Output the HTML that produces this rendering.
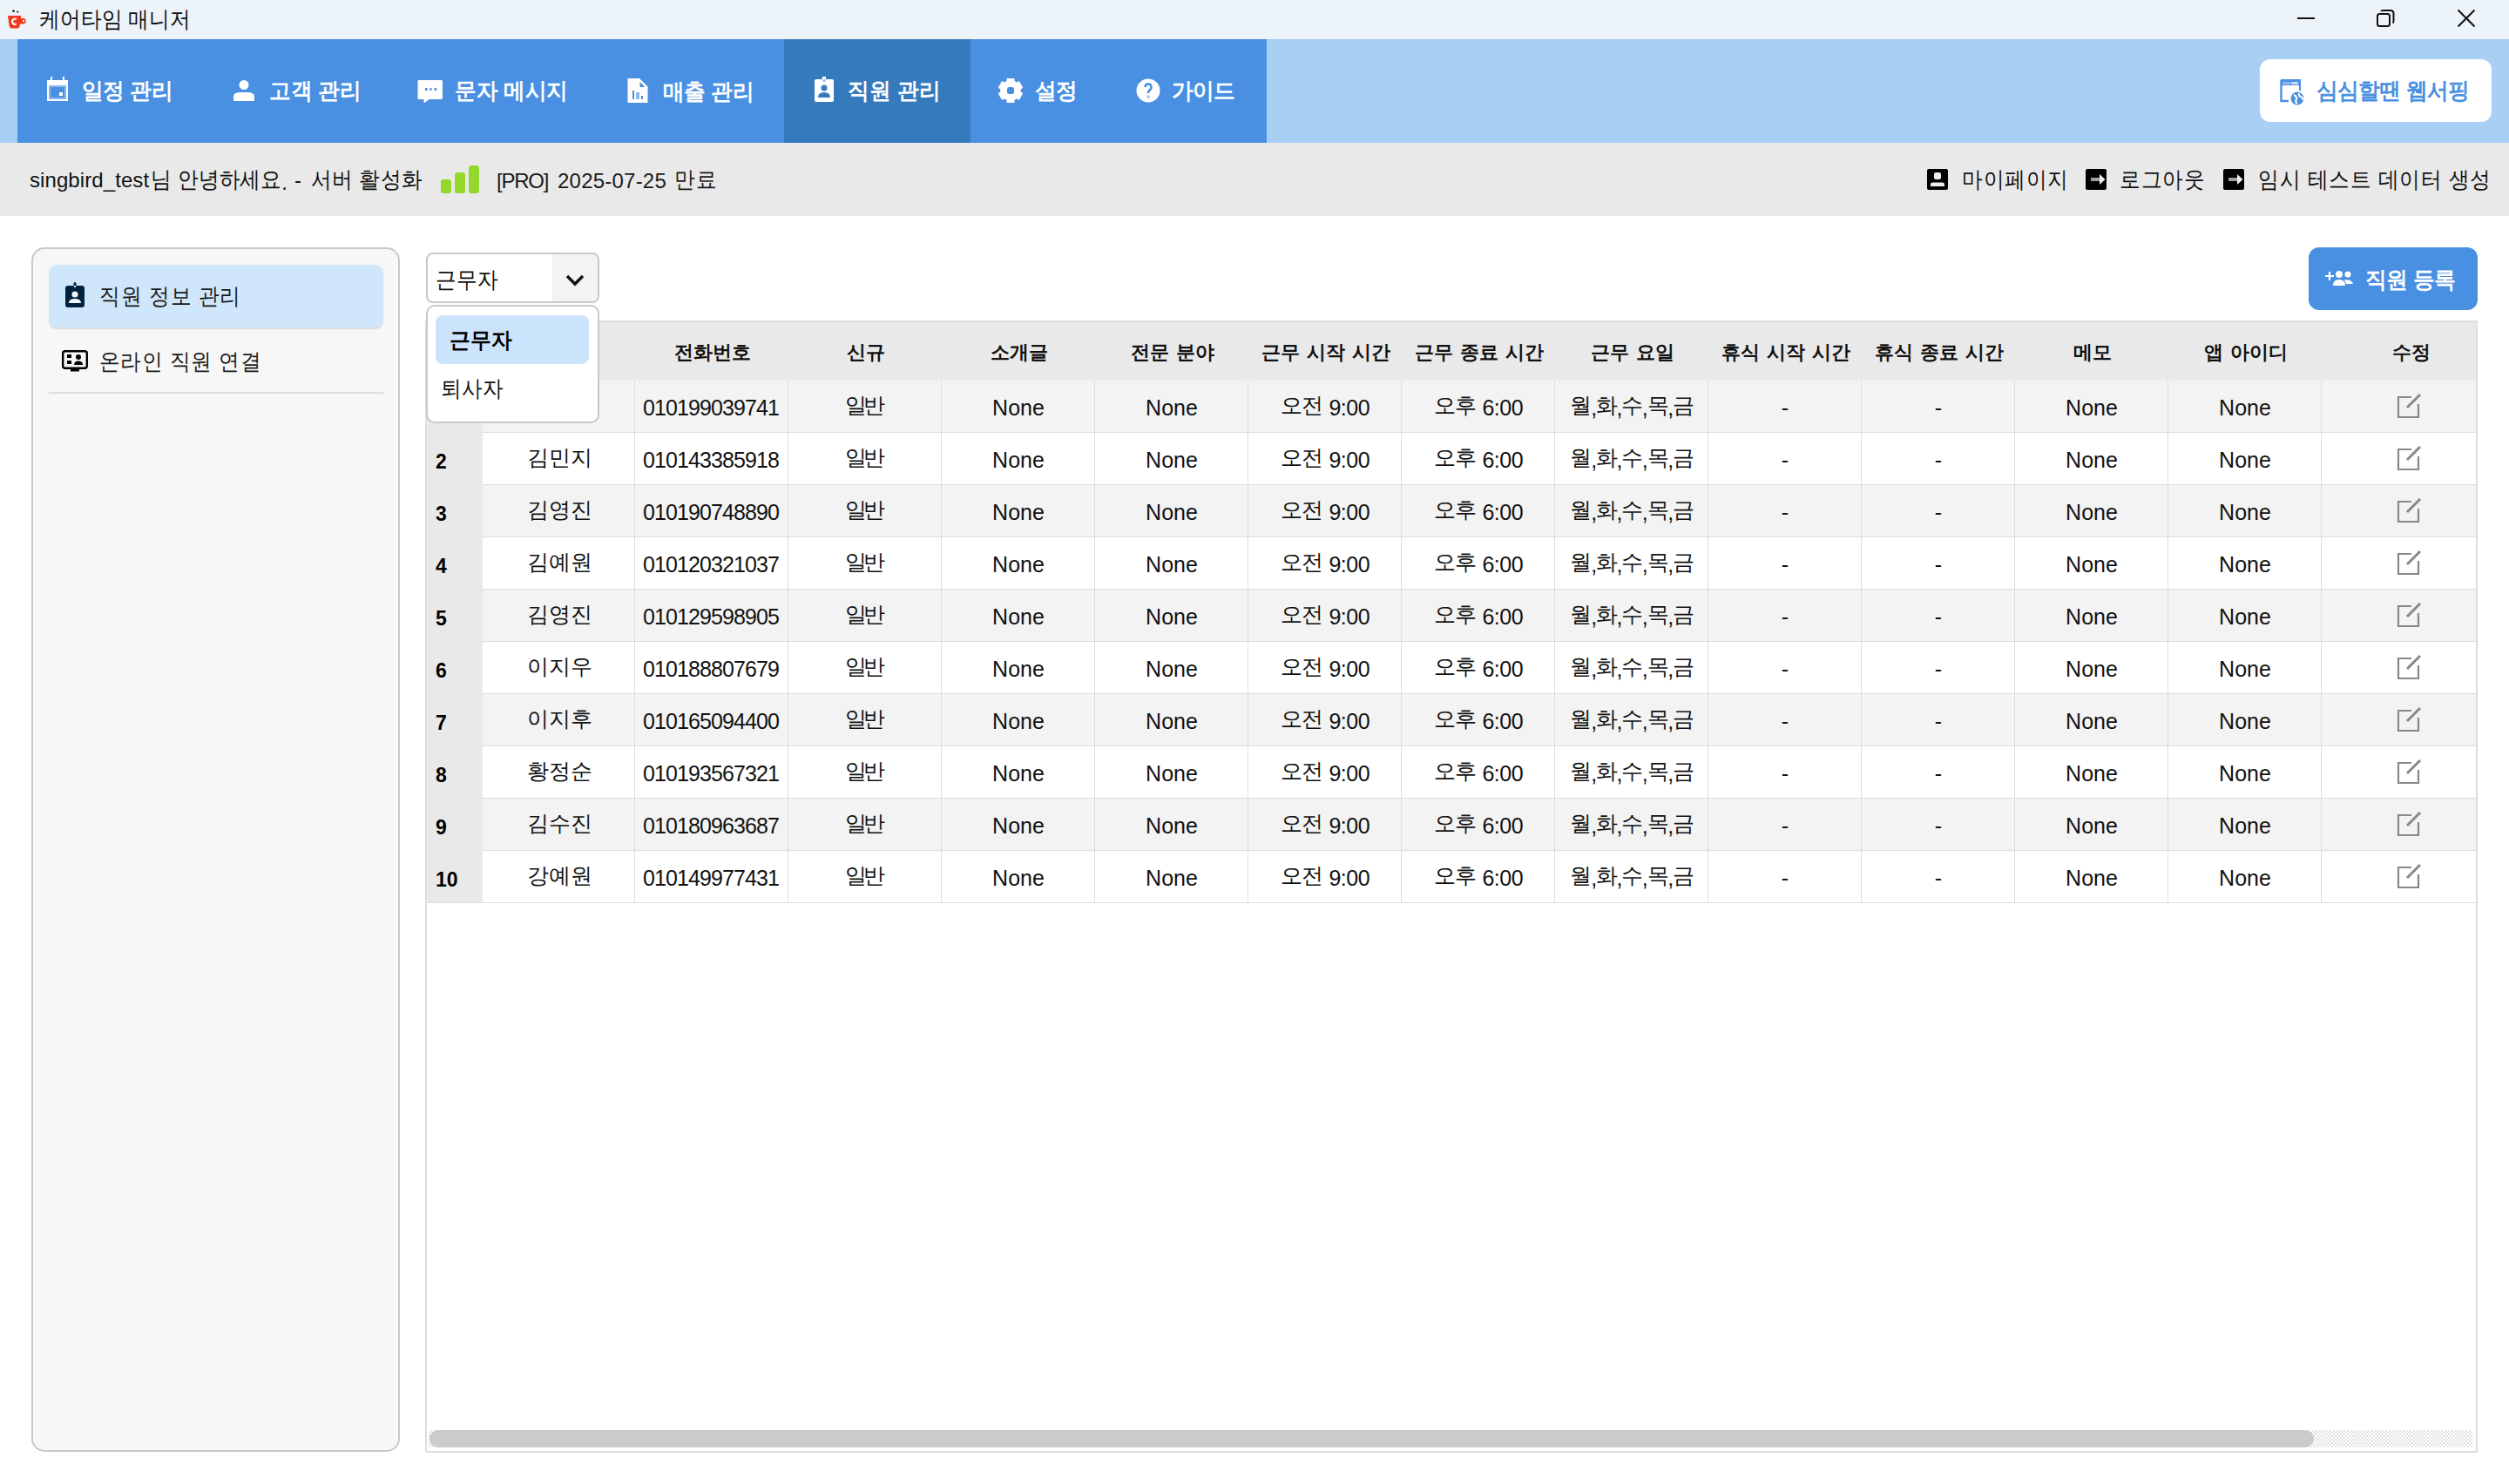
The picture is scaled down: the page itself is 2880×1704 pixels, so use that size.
<!DOCTYPE html>
<html><head><meta charset="utf-8"><title>케어타임 매니저</title>
<style>
*{box-sizing:border-box;margin:0;padding:0}
html,body{width:2880px;height:1704px;overflow:hidden;background:#fff;font-family:"Liberation Sans",sans-serif;color:#111}
.abs{position:absolute}
svg.abs{display:block}
.t{position:absolute;white-space:nowrap;line-height:1;word-spacing:0}
.k{position:relative;top:-0.13em}
.b{font-weight:bold}
.c{text-align:center}
.nw{word-spacing:0}
.hw{word-spacing:2px}
</style></head><body>

<div class="abs" style="left:0px;top:0px;width:2880px;height:45px;background:#ECF4FA"></div>
<svg class="abs" style="left:8px;top:10px" width="24" height="24" viewBox="0 0 24 24"><circle cx="7.5" cy="2.8" r="1.3" fill="#111"/><circle cx="12.3" cy="3.6" r="1.1" fill="#111"/><path d="M1 8 H16 V11 H18.5 A3 3 0 0 1 18.5 17.5 H15.2 Q14.6 22.5 12 22.5 H5.5 Q3 22.5 2.5 19 Z" fill="#F2391C"/><circle cx="19" cy="14" r="1.2" fill="#ECF4FA"/><path d="M10.8 12.3 A3 3 0 1 0 10.8 17.2" stroke="#fff" stroke-width="2" fill="none"/></svg>
<div class="t " style="left:45.00px;top:12.00px;font-size:26px;letter-spacing:0.236px;transform:scaleX(0.91);transform-origin:0 0;color:#111"><span class="k">케어타임 매니저</span></div>
<div class="abs" style="left:2637px;top:20px;width:20px;height:2px;background:#111"></div>
<svg class="abs" style="left:2726px;top:9px" width="26" height="26" viewBox="0 0 26 26"><rect x="3" y="7" width="14" height="14" rx="2.5" fill="none" stroke="#111" stroke-width="2"/><path d="M7 4 Q7.5 3 9.5 3 H18 Q21.5 3 21.5 6.5 V15 Q21.5 16.8 20.5 17.5" fill="none" stroke="#111" stroke-width="2"/></svg>
<svg class="abs" style="left:2819px;top:9px" width="24" height="24" viewBox="0 0 24 24"><path d="M2.5 2.5 L21.5 21.5 M21.5 2.5 L2.5 21.5" stroke="#111" stroke-width="2"/></svg>
<div class="abs" style="left:0px;top:45px;width:2880px;height:119px;background:#AACFF4"></div>
<div class="abs" style="left:20px;top:45px;width:1434px;height:119px;background:#4A90E2"></div>
<div class="abs" style="left:900px;top:45px;width:214px;height:119px;background:#357ABD"></div>
<svg class="abs" style="left:54px;top:88px" width="24" height="29" viewBox="0 0 24 29"><rect x="0" y="4" width="24" height="24" fill="#fff"/><rect x="2" y="10" width="20" height="16" fill="#8AB8EE"/><rect x="4" y="12" width="16" height="12" fill="#4A90E2"/><rect x="4" y="0" width="2" height="5" fill="#fff"/><rect x="18" y="0" width="2" height="5" fill="#fff"/><rect x="14" y="18" width="4" height="4" fill="#fff"/></svg>
<svg class="abs" style="left:268px;top:92px" width="24" height="24" viewBox="0 0 24 24"><circle cx="12" cy="5.5" r="5.5" fill="#fff"/><path d="M0 24 V19 Q0 14 8 14 H16 Q24 14 24 19 V24 Z" fill="#fff"/></svg>
<svg class="abs" style="left:479px;top:91px" width="30" height="28" viewBox="0 0 30 28"><path d="M1.5 1 H27.5 Q29 1 29 2.5 V21.5 Q29 23 27.5 23 H13.5 L8.5 27 H7.5 V23 H1.5 Q0.5 23 0.5 21.5 V2.5 Q0.5 1 1.5 1 Z" fill="#fff"/><rect x="9" y="10" width="2.6" height="3" fill="#4A90E2"/><rect x="14" y="10" width="3" height="3" fill="#7FB0EA"/><rect x="19.5" y="10" width="2.6" height="3" fill="#4A90E2"/></svg>
<svg class="abs" style="left:720px;top:90px" width="24" height="28" viewBox="0 0 24 28"><path d="M0.5 0 H14 L23.5 9.5 V28 H0.5 Z" fill="#fff"/><path d="M14.5 4 V10 H20.5 Z" fill="#4A90E2"/><rect x="6" y="14" width="2" height="10" fill="#4A90E2"/><rect x="10" y="16" width="4" height="8" fill="#8AB8EE"/><rect x="16" y="20" width="2" height="4" fill="#4A90E2"/></svg>
<svg class="abs" style="left:934px;top:88px" width="24" height="30" viewBox="0 0 24 30"><rect x="1" y="3" width="22" height="26" rx="2" fill="#fff"/><rect x="10" y="0" width="4" height="6" fill="#fff"/><rect x="10.5" y="3" width="3" height="3" fill="#9CC0E6"/><circle cx="12" cy="13" r="3.5" fill="#357ABD"/><path d="M5 24 Q5 18 12 18 Q19 18 19 24 Z" fill="#357ABD"/></svg>
<svg class="abs" style="left:1146px;top:90px" width="28" height="28" viewBox="0 0 28 28"><g transform="translate(14 14)" fill="#fff"><rect x="-4.5" y="-14" width="9" height="6" transform="rotate(0)"/><rect x="-4.5" y="-14" width="9" height="6" transform="rotate(60)"/><rect x="-4.5" y="-14" width="9" height="6" transform="rotate(120)"/><rect x="-4.5" y="-14" width="9" height="6" transform="rotate(180)"/><rect x="-4.5" y="-14" width="9" height="6" transform="rotate(240)"/><rect x="-4.5" y="-14" width="9" height="6" transform="rotate(300)"/><circle r="11.8"/></g><rect x="10" y="10" width="8" height="8" rx="2.5" fill="#4A90E2"/></svg>
<svg class="abs" style="left:1304px;top:90px" width="28" height="28" viewBox="0 0 28 28"><circle cx="14" cy="14" r="13.5" fill="#fff"/><path d="M10.5 10 Q10.5 6.5 14 6.5 Q17.5 6.5 17.5 10 Q17.5 12.5 15.5 13.5 Q14 14.5 14 17" fill="none" stroke="#4A90E2" stroke-width="2.6"/><rect x="12.4" y="19.5" width="3.2" height="3.2" fill="#9EC4F0"/></svg>
<div class="t b" style="left:94.00px;top:94.00px;font-size:26px;letter-spacing:-0.312px;transform:scaleX(0.95);transform-origin:0 0;color:#fff"><span class="k">일정 관리</span></div>
<div class="t b" style="left:309.00px;top:94.00px;font-size:26px;letter-spacing:-0.024px;transform:scaleX(0.95);transform-origin:0 0;color:#fff"><span class="k">고객 관리</span></div>
<div class="t b" style="left:522.00px;top:94.00px;font-size:26px;letter-spacing:-0.087px;transform:scaleX(0.95);transform-origin:0 0;color:#fff"><span class="k">문자 메시지</span></div>
<div class="t b" style="left:761.00px;top:95.00px;font-size:26px;letter-spacing:-0.274px;transform:scaleX(0.95);transform-origin:0 0;color:#fff"><span class="k">매출 관리</span></div>
<div class="t b" style="left:973.00px;top:94.00px;font-size:26px;letter-spacing:0.264px;transform:scaleX(0.95);transform-origin:0 0;color:#fff"><span class="k">직원 관리</span></div>
<div class="t b" style="left:1188.00px;top:94.00px;font-size:26px;letter-spacing:-0.730px;transform:scaleX(0.95);transform-origin:0 0;color:#fff"><span class="k">설정</span></div>
<div class="t b" style="left:1345.00px;top:94.00px;font-size:26px;letter-spacing:-0.534px;transform:scaleX(0.95);transform-origin:0 0;color:#fff"><span class="k">가이드</span></div>
<div class="abs" style="left:2594px;top:68px;width:266px;height:72px;background:#fff;border-radius:12px"></div>
<svg class="abs" style="left:2617px;top:91px" width="30" height="30" viewBox="0 0 30 30"><path d="M1 1 H23 V13" fill="none" stroke="#4A90E2" stroke-width="2"/><rect x="1" y="1" width="22" height="6" fill="#4A90E2"/><rect x="3" y="3" width="9" height="3" fill="#8DB8EE"/><rect x="13" y="3" width="8" height="3" fill="#C6DCF6"/><path d="M1.5 1 V25 H10" fill="none" stroke="#4A90E2" stroke-width="2.4"/><circle cx="20" cy="22" r="7.5" fill="#4A90E2"/><path d="M16 18 Q20 20 19 23 Q17 26 20 28 M22 16 Q21 19 24 20 Q26 21 27 24" stroke="#fff" stroke-width="2" fill="none"/></svg>
<div class="t b" style="left:2659.00px;top:94.00px;font-size:26px;letter-spacing:-0.595px;transform:scaleX(0.95);transform-origin:0 0;color:#4A90E2"><span class="k">심심할땐 웹서핑</span></div>
<div class="abs" style="left:0px;top:164px;width:2880px;height:84px;background:#E9E9E9"></div>
<div class="t " style="left:34.00px;top:195.00px;font-size:24px;letter-spacing:0.083px;color:#111">singbird_test</div>
<div class="t " style="left:173.00px;top:196.00px;font-size:26px;letter-spacing:-21.297px;transform:scaleX(0.91);transform-origin:0 0;color:#111"><span class="k">님</span></div>
<div class="t " style="left:204.00px;top:196.00px;font-size:26px;letter-spacing:0.182px;transform:scaleX(0.91);transform-origin:0 0;color:#111"><span class="k">안녕하세요</span>.</div>
<div class="t " style="left:338.00px;top:195.00px;font-size:24px;letter-spacing:24.000px;color:#111">-</div>
<div class="t " style="left:357.00px;top:196.00px;font-size:26px;letter-spacing:0.144px;transform:scaleX(0.91);transform-origin:0 0;color:#111"><span class="k">서버</span></div>
<div class="t " style="left:412.00px;top:196.00px;font-size:26px;letter-spacing:0.932px;transform:scaleX(0.91);transform-origin:0 0;color:#111"><span class="k">활성화</span></div>
<div class="abs" style="left:506px;top:206px;width:12px;height:16px;background:#94D82D;border-radius:3px"></div>
<div class="abs" style="left:522px;top:198px;width:12px;height:24px;background:#94D82D;border-radius:3px"></div>
<div class="abs" style="left:538px;top:190px;width:12px;height:32px;background:#94D82D;border-radius:3px"></div>
<div class="t " style="left:570.00px;top:196.00px;font-size:24px;letter-spacing:-1.250px;color:#1a1a1a">[PRO]</div>
<div class="t " style="left:640.00px;top:196.00px;font-size:24px;letter-spacing:0.222px;color:#1a1a1a">2025-07-25</div>
<div class="t " style="left:774.00px;top:196.00px;font-size:26px;letter-spacing:0.939px;transform:scaleX(0.91);transform-origin:0 0;color:#1a1a1a"><span class="k">만료</span></div>
<svg class="abs" style="left:2212px;top:194px" width="24" height="24" viewBox="0 0 24 24"><rect x="0" y="0" width="24" height="24" rx="2" fill="#000"/><rect x="8" y="4" width="8" height="8" rx="2" fill="#eee"/><path d="M4 20 V17.5 Q4 15.5 7 15.5 H17 Q20 15.5 20 17.5 V20 Z" fill="#eee"/></svg>
<div class="t " style="left:2252.00px;top:196.00px;font-size:26px;letter-spacing:1.002px;transform:scaleX(0.91);transform-origin:0 0;color:#111"><span class="k">마이페이지</span></div>
<svg class="abs" style="left:2394px;top:194px" width="24" height="24" viewBox="0 0 24 24"><rect x="0" y="0" width="24" height="24" rx="2" fill="#000"/><rect x="6" y="10" width="11" height="4" fill="#A0A0A0"/><path d="M16 6 L22.5 12 L16 18 Z" fill="#EEE"/></svg>
<div class="t " style="left:2433.00px;top:196.00px;font-size:26px;letter-spacing:1.129px;transform:scaleX(0.91);transform-origin:0 0;color:#111"><span class="k">로그아웃</span></div>
<svg class="abs" style="left:2552px;top:194px" width="24" height="24" viewBox="0 0 24 24"><rect x="0" y="0" width="24" height="24" rx="2" fill="#000"/><rect x="6" y="10" width="11" height="4" fill="#A0A0A0"/><path d="M16 6 L22.5 12 L16 18 Z" fill="#EEE"/></svg>
<div class="t " style="left:2592.00px;top:196.00px;font-size:26px;letter-spacing:0.977px;transform:scaleX(0.91);transform-origin:0 0;color:#111"><span class="k">임시 테스트 데이터 생성</span></div>
<div class="abs" style="left:36px;top:284px;width:423px;height:1383px;background:#F7F7F7;border:2px solid #C8C8C8;border-radius:15px"></div>
<div class="abs" style="left:56px;top:304px;width:384px;height:72px;background:#D0E6FB;border-radius:9px;box-shadow:0 2px 1px #D8DCE0"></div>
<svg class="abs" style="left:75px;top:324px" width="22" height="30" viewBox="0 0 22 30"><rect x="0" y="4" width="22" height="25" rx="3" fill="#00223F"/><rect x="9.5" y="0" width="3" height="6" rx="1.5" fill="#00223F"/><circle cx="11" cy="5" r="1.2" fill="#D0E6FB"/><circle cx="11" cy="14" r="3.6" fill="#F0F4F8"/><path d="M4 24 Q4 19 11 19 Q18 19 18 24 Z" fill="#F0F4F8"/></svg>
<div class="t " style="left:114.00px;top:330.00px;font-size:26px;letter-spacing:1.106px;transform:scaleX(0.91);transform-origin:0 0;color:#1a1a1a"><span class="k">직원 정보 관리</span></div>
<svg class="abs" style="left:71px;top:402px" width="30" height="25" viewBox="0 0 30 25"><rect x="1.2" y="1.2" width="27.6" height="19.6" rx="2.5" fill="none" stroke="#000" stroke-width="2.4"/><rect x="10" y="21" width="10" height="3.5" fill="#000"/><rect x="6" y="5" width="5" height="4" fill="#000"/><rect x="6" y="12" width="5" height="4" fill="#000"/><circle cx="19" cy="8" r="3" fill="#000"/><path d="M14 17 Q14 12.5 19 12.5 Q24 12.5 24 17 Z" fill="#000"/></svg>
<div class="t " style="left:114.00px;top:405.00px;font-size:26px;letter-spacing:0.908px;transform:scaleX(0.91);transform-origin:0 0;color:#1a1a1a"><span class="k">온라인 직원 연결</span></div>
<div class="abs" style="left:56px;top:450px;width:384px;height:2px;background:#DDDDDD"></div>
<div class="abs" style="left:488px;top:368px;width:2356px;height:1300px;background:#fff;border:2px solid #DDDDDD"></div>
<div class="abs" style="left:490px;top:370px;width:2352px;height:67px;background:#E9E9E9"></div>
<div class="abs" style="left:554px;top:437px;width:2288px;height:59px;background:#F3F3F3"></div>
<div class="abs" style="left:554px;top:496px;width:2288px;height:1px;background:#DDDDDD"></div>
<div class="abs" style="left:554px;top:497px;width:2288px;height:59px;background:#FFFFFF"></div>
<div class="abs" style="left:554px;top:556px;width:2288px;height:1px;background:#DDDDDD"></div>
<div class="abs" style="left:554px;top:557px;width:2288px;height:59px;background:#F3F3F3"></div>
<div class="abs" style="left:554px;top:616px;width:2288px;height:1px;background:#DDDDDD"></div>
<div class="abs" style="left:554px;top:617px;width:2288px;height:59px;background:#FFFFFF"></div>
<div class="abs" style="left:554px;top:676px;width:2288px;height:1px;background:#DDDDDD"></div>
<div class="abs" style="left:554px;top:677px;width:2288px;height:59px;background:#F3F3F3"></div>
<div class="abs" style="left:554px;top:736px;width:2288px;height:1px;background:#DDDDDD"></div>
<div class="abs" style="left:554px;top:737px;width:2288px;height:59px;background:#FFFFFF"></div>
<div class="abs" style="left:554px;top:796px;width:2288px;height:1px;background:#DDDDDD"></div>
<div class="abs" style="left:554px;top:797px;width:2288px;height:59px;background:#F3F3F3"></div>
<div class="abs" style="left:554px;top:856px;width:2288px;height:1px;background:#DDDDDD"></div>
<div class="abs" style="left:554px;top:857px;width:2288px;height:59px;background:#FFFFFF"></div>
<div class="abs" style="left:554px;top:916px;width:2288px;height:1px;background:#DDDDDD"></div>
<div class="abs" style="left:554px;top:917px;width:2288px;height:59px;background:#F3F3F3"></div>
<div class="abs" style="left:554px;top:976px;width:2288px;height:1px;background:#DDDDDD"></div>
<div class="abs" style="left:554px;top:977px;width:2288px;height:59px;background:#FFFFFF"></div>
<div class="abs" style="left:554px;top:1036px;width:2288px;height:1px;background:#DDDDDD"></div>
<div class="abs" style="left:490px;top:437px;width:64px;height:599px;background:#E9E9E9"></div>
<div class="abs" style="left:490px;top:1036px;width:64px;height:1px;background:#DDDDDD"></div>
<div class="abs" style="left:728px;top:437px;width:1px;height:599px;background:#DDDDDD"></div>
<div class="abs" style="left:904px;top:437px;width:1px;height:599px;background:#DDDDDD"></div>
<div class="abs" style="left:1080px;top:437px;width:1px;height:599px;background:#DDDDDD"></div>
<div class="abs" style="left:1256px;top:437px;width:1px;height:599px;background:#DDDDDD"></div>
<div class="abs" style="left:1432px;top:437px;width:1px;height:599px;background:#DDDDDD"></div>
<div class="abs" style="left:1608px;top:437px;width:1px;height:599px;background:#DDDDDD"></div>
<div class="abs" style="left:1784px;top:437px;width:1px;height:599px;background:#DDDDDD"></div>
<div class="abs" style="left:1960px;top:437px;width:1px;height:599px;background:#DDDDDD"></div>
<div class="abs" style="left:2136px;top:437px;width:1px;height:599px;background:#DDDDDD"></div>
<div class="abs" style="left:2312px;top:437px;width:1px;height:599px;background:#DDDDDD"></div>
<div class="abs" style="left:2488px;top:437px;width:1px;height:599px;background:#DDDDDD"></div>
<div class="abs" style="left:2664px;top:437px;width:1px;height:599px;background:#DDDDDD"></div>
<div class="t c b hw" style="left:556px;top:397px;width:174px;font-size:22px;letter-spacing:0px;color:#111"><span class="k">이름</span></div>
<div class="t c b hw" style="left:730px;top:397px;width:176px;font-size:22px;letter-spacing:0px;color:#111"><span class="k">전화번호</span></div>
<div class="t c b hw" style="left:906px;top:397px;width:176px;font-size:22px;letter-spacing:0px;color:#111"><span class="k">신규</span></div>
<div class="t c b hw" style="left:1082px;top:397px;width:176px;font-size:22px;letter-spacing:0px;color:#111"><span class="k">소개글</span></div>
<div class="t c b hw" style="left:1258px;top:397px;width:176px;font-size:22px;letter-spacing:0px;color:#111"><span class="k">전문 분야</span></div>
<div class="t c b hw" style="left:1434px;top:397px;width:176px;font-size:22px;letter-spacing:0px;color:#111"><span class="k">근무 시작 시간</span></div>
<div class="t c b hw" style="left:1610px;top:397px;width:176px;font-size:22px;letter-spacing:0px;color:#111"><span class="k">근무 종료 시간</span></div>
<div class="t c b hw" style="left:1786px;top:397px;width:176px;font-size:22px;letter-spacing:0px;color:#111"><span class="k">근무 요일</span></div>
<div class="t c b hw" style="left:1962px;top:397px;width:176px;font-size:22px;letter-spacing:0px;color:#111"><span class="k">휴식 시작 시간</span></div>
<div class="t c b hw" style="left:2138px;top:397px;width:176px;font-size:22px;letter-spacing:0px;color:#111"><span class="k">휴식 종료 시간</span></div>
<div class="t c b hw" style="left:2314px;top:397px;width:176px;font-size:22px;letter-spacing:0px;color:#111"><span class="k">메모</span></div>
<div class="t c b hw" style="left:2490px;top:397px;width:176px;font-size:22px;letter-spacing:0px;color:#111"><span class="k">앱 아이디</span></div>
<div class="t c b hw" style="left:2666px;top:397px;width:204px;font-size:22px;letter-spacing:0px;color:#111"><span class="k">수정</span></div>
<div class="t b" style="left:500px;top:459px;font-size:23px;color:#000">1</div>
<div class="t c nw" style="left:555px;top:456px;width:174px;font-size:25px;letter-spacing:0px;color:#111"><span class="k">김지우</span></div>
<div class="t c nw" style="left:728px;top:456px;width:176px;font-size:25px;letter-spacing:-0.9px;color:#111">010199039741</div>
<div class="t c nw" style="left:903px;top:456px;width:176px;font-size:25px;letter-spacing:-4px;color:#111"><span class="k">일반</span></div>
<div class="t c nw" style="left:1081px;top:456px;width:176px;font-size:25px;letter-spacing:0px;color:#111">None</div>
<div class="t c nw" style="left:1257px;top:456px;width:176px;font-size:25px;letter-spacing:0px;color:#111">None</div>
<div class="t c nw" style="left:1433px;top:456px;width:176px;font-size:25px;letter-spacing:-0.5px;color:#111"><span class="k">오전</span> 9:00</div>
<div class="t c nw" style="left:1609px;top:456px;width:176px;font-size:25px;letter-spacing:-0.5px;color:#111"><span class="k">오후</span> 6:00</div>
<div class="t c nw" style="left:1785px;top:456px;width:176px;font-size:25px;letter-spacing:-1.3px;color:#111"><span class="k">월</span>,<span class="k">화</span>,<span class="k">수</span>,<span class="k">목</span>,<span class="k">금</span></div>
<div class="t c nw" style="left:1961px;top:456px;width:176px;font-size:25px;letter-spacing:0px;color:#111">-</div>
<div class="t c nw" style="left:2137px;top:456px;width:176px;font-size:25px;letter-spacing:0px;color:#111">-</div>
<div class="t c nw" style="left:2313px;top:456px;width:176px;font-size:25px;letter-spacing:0px;color:#111">None</div>
<div class="t c nw" style="left:2489px;top:456px;width:176px;font-size:25px;letter-spacing:0px;color:#111">None</div>
<svg class="abs" style="left:2751px;top:451px" width="30" height="30" viewBox="0 0 30 30"><path d="M17 5 H2 V28 H25 V13" fill="none" stroke="#888" stroke-width="2.2"/><path d="M12 17 L27 2" stroke="#888" stroke-width="3"/></svg>
<div class="t b" style="left:500px;top:519px;font-size:23px;color:#000">2</div>
<div class="t c nw" style="left:555px;top:516px;width:174px;font-size:25px;letter-spacing:0px;color:#111"><span class="k">김민지</span></div>
<div class="t c nw" style="left:728px;top:516px;width:176px;font-size:25px;letter-spacing:-0.9px;color:#111">010143385918</div>
<div class="t c nw" style="left:903px;top:516px;width:176px;font-size:25px;letter-spacing:-4px;color:#111"><span class="k">일반</span></div>
<div class="t c nw" style="left:1081px;top:516px;width:176px;font-size:25px;letter-spacing:0px;color:#111">None</div>
<div class="t c nw" style="left:1257px;top:516px;width:176px;font-size:25px;letter-spacing:0px;color:#111">None</div>
<div class="t c nw" style="left:1433px;top:516px;width:176px;font-size:25px;letter-spacing:-0.5px;color:#111"><span class="k">오전</span> 9:00</div>
<div class="t c nw" style="left:1609px;top:516px;width:176px;font-size:25px;letter-spacing:-0.5px;color:#111"><span class="k">오후</span> 6:00</div>
<div class="t c nw" style="left:1785px;top:516px;width:176px;font-size:25px;letter-spacing:-1.3px;color:#111"><span class="k">월</span>,<span class="k">화</span>,<span class="k">수</span>,<span class="k">목</span>,<span class="k">금</span></div>
<div class="t c nw" style="left:1961px;top:516px;width:176px;font-size:25px;letter-spacing:0px;color:#111">-</div>
<div class="t c nw" style="left:2137px;top:516px;width:176px;font-size:25px;letter-spacing:0px;color:#111">-</div>
<div class="t c nw" style="left:2313px;top:516px;width:176px;font-size:25px;letter-spacing:0px;color:#111">None</div>
<div class="t c nw" style="left:2489px;top:516px;width:176px;font-size:25px;letter-spacing:0px;color:#111">None</div>
<svg class="abs" style="left:2751px;top:511px" width="30" height="30" viewBox="0 0 30 30"><path d="M17 5 H2 V28 H25 V13" fill="none" stroke="#888" stroke-width="2.2"/><path d="M12 17 L27 2" stroke="#888" stroke-width="3"/></svg>
<div class="t b" style="left:500px;top:579px;font-size:23px;color:#000">3</div>
<div class="t c nw" style="left:555px;top:576px;width:174px;font-size:25px;letter-spacing:0px;color:#111"><span class="k">김영진</span></div>
<div class="t c nw" style="left:728px;top:576px;width:176px;font-size:25px;letter-spacing:-0.9px;color:#111">010190748890</div>
<div class="t c nw" style="left:903px;top:576px;width:176px;font-size:25px;letter-spacing:-4px;color:#111"><span class="k">일반</span></div>
<div class="t c nw" style="left:1081px;top:576px;width:176px;font-size:25px;letter-spacing:0px;color:#111">None</div>
<div class="t c nw" style="left:1257px;top:576px;width:176px;font-size:25px;letter-spacing:0px;color:#111">None</div>
<div class="t c nw" style="left:1433px;top:576px;width:176px;font-size:25px;letter-spacing:-0.5px;color:#111"><span class="k">오전</span> 9:00</div>
<div class="t c nw" style="left:1609px;top:576px;width:176px;font-size:25px;letter-spacing:-0.5px;color:#111"><span class="k">오후</span> 6:00</div>
<div class="t c nw" style="left:1785px;top:576px;width:176px;font-size:25px;letter-spacing:-1.3px;color:#111"><span class="k">월</span>,<span class="k">화</span>,<span class="k">수</span>,<span class="k">목</span>,<span class="k">금</span></div>
<div class="t c nw" style="left:1961px;top:576px;width:176px;font-size:25px;letter-spacing:0px;color:#111">-</div>
<div class="t c nw" style="left:2137px;top:576px;width:176px;font-size:25px;letter-spacing:0px;color:#111">-</div>
<div class="t c nw" style="left:2313px;top:576px;width:176px;font-size:25px;letter-spacing:0px;color:#111">None</div>
<div class="t c nw" style="left:2489px;top:576px;width:176px;font-size:25px;letter-spacing:0px;color:#111">None</div>
<svg class="abs" style="left:2751px;top:571px" width="30" height="30" viewBox="0 0 30 30"><path d="M17 5 H2 V28 H25 V13" fill="none" stroke="#888" stroke-width="2.2"/><path d="M12 17 L27 2" stroke="#888" stroke-width="3"/></svg>
<div class="t b" style="left:500px;top:639px;font-size:23px;color:#000">4</div>
<div class="t c nw" style="left:555px;top:636px;width:174px;font-size:25px;letter-spacing:0px;color:#111"><span class="k">김예원</span></div>
<div class="t c nw" style="left:728px;top:636px;width:176px;font-size:25px;letter-spacing:-0.9px;color:#111">010120321037</div>
<div class="t c nw" style="left:903px;top:636px;width:176px;font-size:25px;letter-spacing:-4px;color:#111"><span class="k">일반</span></div>
<div class="t c nw" style="left:1081px;top:636px;width:176px;font-size:25px;letter-spacing:0px;color:#111">None</div>
<div class="t c nw" style="left:1257px;top:636px;width:176px;font-size:25px;letter-spacing:0px;color:#111">None</div>
<div class="t c nw" style="left:1433px;top:636px;width:176px;font-size:25px;letter-spacing:-0.5px;color:#111"><span class="k">오전</span> 9:00</div>
<div class="t c nw" style="left:1609px;top:636px;width:176px;font-size:25px;letter-spacing:-0.5px;color:#111"><span class="k">오후</span> 6:00</div>
<div class="t c nw" style="left:1785px;top:636px;width:176px;font-size:25px;letter-spacing:-1.3px;color:#111"><span class="k">월</span>,<span class="k">화</span>,<span class="k">수</span>,<span class="k">목</span>,<span class="k">금</span></div>
<div class="t c nw" style="left:1961px;top:636px;width:176px;font-size:25px;letter-spacing:0px;color:#111">-</div>
<div class="t c nw" style="left:2137px;top:636px;width:176px;font-size:25px;letter-spacing:0px;color:#111">-</div>
<div class="t c nw" style="left:2313px;top:636px;width:176px;font-size:25px;letter-spacing:0px;color:#111">None</div>
<div class="t c nw" style="left:2489px;top:636px;width:176px;font-size:25px;letter-spacing:0px;color:#111">None</div>
<svg class="abs" style="left:2751px;top:631px" width="30" height="30" viewBox="0 0 30 30"><path d="M17 5 H2 V28 H25 V13" fill="none" stroke="#888" stroke-width="2.2"/><path d="M12 17 L27 2" stroke="#888" stroke-width="3"/></svg>
<div class="t b" style="left:500px;top:699px;font-size:23px;color:#000">5</div>
<div class="t c nw" style="left:555px;top:696px;width:174px;font-size:25px;letter-spacing:0px;color:#111"><span class="k">김영진</span></div>
<div class="t c nw" style="left:728px;top:696px;width:176px;font-size:25px;letter-spacing:-0.9px;color:#111">010129598905</div>
<div class="t c nw" style="left:903px;top:696px;width:176px;font-size:25px;letter-spacing:-4px;color:#111"><span class="k">일반</span></div>
<div class="t c nw" style="left:1081px;top:696px;width:176px;font-size:25px;letter-spacing:0px;color:#111">None</div>
<div class="t c nw" style="left:1257px;top:696px;width:176px;font-size:25px;letter-spacing:0px;color:#111">None</div>
<div class="t c nw" style="left:1433px;top:696px;width:176px;font-size:25px;letter-spacing:-0.5px;color:#111"><span class="k">오전</span> 9:00</div>
<div class="t c nw" style="left:1609px;top:696px;width:176px;font-size:25px;letter-spacing:-0.5px;color:#111"><span class="k">오후</span> 6:00</div>
<div class="t c nw" style="left:1785px;top:696px;width:176px;font-size:25px;letter-spacing:-1.3px;color:#111"><span class="k">월</span>,<span class="k">화</span>,<span class="k">수</span>,<span class="k">목</span>,<span class="k">금</span></div>
<div class="t c nw" style="left:1961px;top:696px;width:176px;font-size:25px;letter-spacing:0px;color:#111">-</div>
<div class="t c nw" style="left:2137px;top:696px;width:176px;font-size:25px;letter-spacing:0px;color:#111">-</div>
<div class="t c nw" style="left:2313px;top:696px;width:176px;font-size:25px;letter-spacing:0px;color:#111">None</div>
<div class="t c nw" style="left:2489px;top:696px;width:176px;font-size:25px;letter-spacing:0px;color:#111">None</div>
<svg class="abs" style="left:2751px;top:691px" width="30" height="30" viewBox="0 0 30 30"><path d="M17 5 H2 V28 H25 V13" fill="none" stroke="#888" stroke-width="2.2"/><path d="M12 17 L27 2" stroke="#888" stroke-width="3"/></svg>
<div class="t b" style="left:500px;top:759px;font-size:23px;color:#000">6</div>
<div class="t c nw" style="left:555px;top:756px;width:174px;font-size:25px;letter-spacing:0px;color:#111"><span class="k">이지우</span></div>
<div class="t c nw" style="left:728px;top:756px;width:176px;font-size:25px;letter-spacing:-0.9px;color:#111">010188807679</div>
<div class="t c nw" style="left:903px;top:756px;width:176px;font-size:25px;letter-spacing:-4px;color:#111"><span class="k">일반</span></div>
<div class="t c nw" style="left:1081px;top:756px;width:176px;font-size:25px;letter-spacing:0px;color:#111">None</div>
<div class="t c nw" style="left:1257px;top:756px;width:176px;font-size:25px;letter-spacing:0px;color:#111">None</div>
<div class="t c nw" style="left:1433px;top:756px;width:176px;font-size:25px;letter-spacing:-0.5px;color:#111"><span class="k">오전</span> 9:00</div>
<div class="t c nw" style="left:1609px;top:756px;width:176px;font-size:25px;letter-spacing:-0.5px;color:#111"><span class="k">오후</span> 6:00</div>
<div class="t c nw" style="left:1785px;top:756px;width:176px;font-size:25px;letter-spacing:-1.3px;color:#111"><span class="k">월</span>,<span class="k">화</span>,<span class="k">수</span>,<span class="k">목</span>,<span class="k">금</span></div>
<div class="t c nw" style="left:1961px;top:756px;width:176px;font-size:25px;letter-spacing:0px;color:#111">-</div>
<div class="t c nw" style="left:2137px;top:756px;width:176px;font-size:25px;letter-spacing:0px;color:#111">-</div>
<div class="t c nw" style="left:2313px;top:756px;width:176px;font-size:25px;letter-spacing:0px;color:#111">None</div>
<div class="t c nw" style="left:2489px;top:756px;width:176px;font-size:25px;letter-spacing:0px;color:#111">None</div>
<svg class="abs" style="left:2751px;top:751px" width="30" height="30" viewBox="0 0 30 30"><path d="M17 5 H2 V28 H25 V13" fill="none" stroke="#888" stroke-width="2.2"/><path d="M12 17 L27 2" stroke="#888" stroke-width="3"/></svg>
<div class="t b" style="left:500px;top:819px;font-size:23px;color:#000">7</div>
<div class="t c nw" style="left:555px;top:816px;width:174px;font-size:25px;letter-spacing:0px;color:#111"><span class="k">이지후</span></div>
<div class="t c nw" style="left:728px;top:816px;width:176px;font-size:25px;letter-spacing:-0.9px;color:#111">010165094400</div>
<div class="t c nw" style="left:903px;top:816px;width:176px;font-size:25px;letter-spacing:-4px;color:#111"><span class="k">일반</span></div>
<div class="t c nw" style="left:1081px;top:816px;width:176px;font-size:25px;letter-spacing:0px;color:#111">None</div>
<div class="t c nw" style="left:1257px;top:816px;width:176px;font-size:25px;letter-spacing:0px;color:#111">None</div>
<div class="t c nw" style="left:1433px;top:816px;width:176px;font-size:25px;letter-spacing:-0.5px;color:#111"><span class="k">오전</span> 9:00</div>
<div class="t c nw" style="left:1609px;top:816px;width:176px;font-size:25px;letter-spacing:-0.5px;color:#111"><span class="k">오후</span> 6:00</div>
<div class="t c nw" style="left:1785px;top:816px;width:176px;font-size:25px;letter-spacing:-1.3px;color:#111"><span class="k">월</span>,<span class="k">화</span>,<span class="k">수</span>,<span class="k">목</span>,<span class="k">금</span></div>
<div class="t c nw" style="left:1961px;top:816px;width:176px;font-size:25px;letter-spacing:0px;color:#111">-</div>
<div class="t c nw" style="left:2137px;top:816px;width:176px;font-size:25px;letter-spacing:0px;color:#111">-</div>
<div class="t c nw" style="left:2313px;top:816px;width:176px;font-size:25px;letter-spacing:0px;color:#111">None</div>
<div class="t c nw" style="left:2489px;top:816px;width:176px;font-size:25px;letter-spacing:0px;color:#111">None</div>
<svg class="abs" style="left:2751px;top:811px" width="30" height="30" viewBox="0 0 30 30"><path d="M17 5 H2 V28 H25 V13" fill="none" stroke="#888" stroke-width="2.2"/><path d="M12 17 L27 2" stroke="#888" stroke-width="3"/></svg>
<div class="t b" style="left:500px;top:879px;font-size:23px;color:#000">8</div>
<div class="t c nw" style="left:555px;top:876px;width:174px;font-size:25px;letter-spacing:0px;color:#111"><span class="k">황정순</span></div>
<div class="t c nw" style="left:728px;top:876px;width:176px;font-size:25px;letter-spacing:-0.9px;color:#111">010193567321</div>
<div class="t c nw" style="left:903px;top:876px;width:176px;font-size:25px;letter-spacing:-4px;color:#111"><span class="k">일반</span></div>
<div class="t c nw" style="left:1081px;top:876px;width:176px;font-size:25px;letter-spacing:0px;color:#111">None</div>
<div class="t c nw" style="left:1257px;top:876px;width:176px;font-size:25px;letter-spacing:0px;color:#111">None</div>
<div class="t c nw" style="left:1433px;top:876px;width:176px;font-size:25px;letter-spacing:-0.5px;color:#111"><span class="k">오전</span> 9:00</div>
<div class="t c nw" style="left:1609px;top:876px;width:176px;font-size:25px;letter-spacing:-0.5px;color:#111"><span class="k">오후</span> 6:00</div>
<div class="t c nw" style="left:1785px;top:876px;width:176px;font-size:25px;letter-spacing:-1.3px;color:#111"><span class="k">월</span>,<span class="k">화</span>,<span class="k">수</span>,<span class="k">목</span>,<span class="k">금</span></div>
<div class="t c nw" style="left:1961px;top:876px;width:176px;font-size:25px;letter-spacing:0px;color:#111">-</div>
<div class="t c nw" style="left:2137px;top:876px;width:176px;font-size:25px;letter-spacing:0px;color:#111">-</div>
<div class="t c nw" style="left:2313px;top:876px;width:176px;font-size:25px;letter-spacing:0px;color:#111">None</div>
<div class="t c nw" style="left:2489px;top:876px;width:176px;font-size:25px;letter-spacing:0px;color:#111">None</div>
<svg class="abs" style="left:2751px;top:871px" width="30" height="30" viewBox="0 0 30 30"><path d="M17 5 H2 V28 H25 V13" fill="none" stroke="#888" stroke-width="2.2"/><path d="M12 17 L27 2" stroke="#888" stroke-width="3"/></svg>
<div class="t b" style="left:500px;top:939px;font-size:23px;color:#000">9</div>
<div class="t c nw" style="left:555px;top:936px;width:174px;font-size:25px;letter-spacing:0px;color:#111"><span class="k">김수진</span></div>
<div class="t c nw" style="left:728px;top:936px;width:176px;font-size:25px;letter-spacing:-0.9px;color:#111">010180963687</div>
<div class="t c nw" style="left:903px;top:936px;width:176px;font-size:25px;letter-spacing:-4px;color:#111"><span class="k">일반</span></div>
<div class="t c nw" style="left:1081px;top:936px;width:176px;font-size:25px;letter-spacing:0px;color:#111">None</div>
<div class="t c nw" style="left:1257px;top:936px;width:176px;font-size:25px;letter-spacing:0px;color:#111">None</div>
<div class="t c nw" style="left:1433px;top:936px;width:176px;font-size:25px;letter-spacing:-0.5px;color:#111"><span class="k">오전</span> 9:00</div>
<div class="t c nw" style="left:1609px;top:936px;width:176px;font-size:25px;letter-spacing:-0.5px;color:#111"><span class="k">오후</span> 6:00</div>
<div class="t c nw" style="left:1785px;top:936px;width:176px;font-size:25px;letter-spacing:-1.3px;color:#111"><span class="k">월</span>,<span class="k">화</span>,<span class="k">수</span>,<span class="k">목</span>,<span class="k">금</span></div>
<div class="t c nw" style="left:1961px;top:936px;width:176px;font-size:25px;letter-spacing:0px;color:#111">-</div>
<div class="t c nw" style="left:2137px;top:936px;width:176px;font-size:25px;letter-spacing:0px;color:#111">-</div>
<div class="t c nw" style="left:2313px;top:936px;width:176px;font-size:25px;letter-spacing:0px;color:#111">None</div>
<div class="t c nw" style="left:2489px;top:936px;width:176px;font-size:25px;letter-spacing:0px;color:#111">None</div>
<svg class="abs" style="left:2751px;top:931px" width="30" height="30" viewBox="0 0 30 30"><path d="M17 5 H2 V28 H25 V13" fill="none" stroke="#888" stroke-width="2.2"/><path d="M12 17 L27 2" stroke="#888" stroke-width="3"/></svg>
<div class="t b" style="left:500px;top:999px;font-size:23px;color:#000">10</div>
<div class="t c nw" style="left:555px;top:996px;width:174px;font-size:25px;letter-spacing:0px;color:#111"><span class="k">강예원</span></div>
<div class="t c nw" style="left:728px;top:996px;width:176px;font-size:25px;letter-spacing:-0.9px;color:#111">010149977431</div>
<div class="t c nw" style="left:903px;top:996px;width:176px;font-size:25px;letter-spacing:-4px;color:#111"><span class="k">일반</span></div>
<div class="t c nw" style="left:1081px;top:996px;width:176px;font-size:25px;letter-spacing:0px;color:#111">None</div>
<div class="t c nw" style="left:1257px;top:996px;width:176px;font-size:25px;letter-spacing:0px;color:#111">None</div>
<div class="t c nw" style="left:1433px;top:996px;width:176px;font-size:25px;letter-spacing:-0.5px;color:#111"><span class="k">오전</span> 9:00</div>
<div class="t c nw" style="left:1609px;top:996px;width:176px;font-size:25px;letter-spacing:-0.5px;color:#111"><span class="k">오후</span> 6:00</div>
<div class="t c nw" style="left:1785px;top:996px;width:176px;font-size:25px;letter-spacing:-1.3px;color:#111"><span class="k">월</span>,<span class="k">화</span>,<span class="k">수</span>,<span class="k">목</span>,<span class="k">금</span></div>
<div class="t c nw" style="left:1961px;top:996px;width:176px;font-size:25px;letter-spacing:0px;color:#111">-</div>
<div class="t c nw" style="left:2137px;top:996px;width:176px;font-size:25px;letter-spacing:0px;color:#111">-</div>
<div class="t c nw" style="left:2313px;top:996px;width:176px;font-size:25px;letter-spacing:0px;color:#111">None</div>
<div class="t c nw" style="left:2489px;top:996px;width:176px;font-size:25px;letter-spacing:0px;color:#111">None</div>
<svg class="abs" style="left:2751px;top:991px" width="30" height="30" viewBox="0 0 30 30"><path d="M17 5 H2 V28 H25 V13" fill="none" stroke="#888" stroke-width="2.2"/><path d="M12 17 L27 2" stroke="#888" stroke-width="3"/></svg>
<div class="abs" style="left:492px;top:1642px;width:2346px;height:20px;background-image:repeating-conic-gradient(#E2E2E2 0 25%, #fff 0 50%);background-size:4px 4px"></div>
<div class="abs" style="left:493px;top:1642px;width:2163px;height:20px;background:#CBCBCB;border-radius:10px"></div>
<div class="abs" style="left:489px;top:290px;width:199px;height:58px;background:#fff;border:2px solid #C8C8C8;border-radius:8px"></div>
<div class="abs" style="left:634px;top:292px;width:52px;height:54px;background:#F3F3F3;border-radius:0 6px 6px 0"></div>
<svg class="abs" style="left:648px;top:314px" width="24" height="16" viewBox="0 0 24 16"><path d="M3 3 L12 12 L21 3" fill="none" stroke="#111" stroke-width="3.4"/></svg>
<div class="t " style="left:500.00px;top:311.00px;font-size:26px;letter-spacing:0.485px;transform:scaleX(0.91);transform-origin:0 0;color:#111"><span class="k">근무자</span></div>
<div class="abs" style="left:489px;top:350px;width:199px;height:136px;background:#fff;border:2px solid #C8C8C8;border-radius:10px"></div>
<div class="abs" style="left:500px;top:362px;width:176px;height:56px;background:#CCE4FB;border-radius:8px"></div>
<div class="t b" style="left:516.00px;top:381.00px;font-size:25px;letter-spacing:0.466px;transform:scaleX(0.95);transform-origin:0 0;color:#000"><span class="k">근무자</span></div>
<div class="t " style="left:506.00px;top:436.00px;font-size:26px;letter-spacing:0.485px;transform:scaleX(0.91);transform-origin:0 0;color:#111"><span class="k">퇴사자</span></div>
<div class="abs" style="left:2650px;top:284px;width:194px;height:72px;background:#4A90E2;border-radius:12px"></div>
<svg class="abs" style="left:2669px;top:309px" width="33" height="20" viewBox="0 0 33 20"><path d="M4 3 V13 M-1 8 H9" transform="translate(1 0)" stroke="#fff" stroke-width="2.2"/><circle cx="16" cy="6" r="4" fill="#fff"/><path d="M9 19 Q9 12 16 12 Q23 12 23 19 Z" fill="#fff"/><circle cx="26" cy="6" r="3.5" fill="#fff"/><path d="M22 12.5 Q30 11 32 17 H24 Z" fill="#fff"/></svg>
<div class="t b" style="left:2715.00px;top:311.00px;font-size:26px;letter-spacing:-0.524px;transform:scaleX(0.95);transform-origin:0 0;color:#fff"><span class="k">직원 등록</span></div>
</body></html>
